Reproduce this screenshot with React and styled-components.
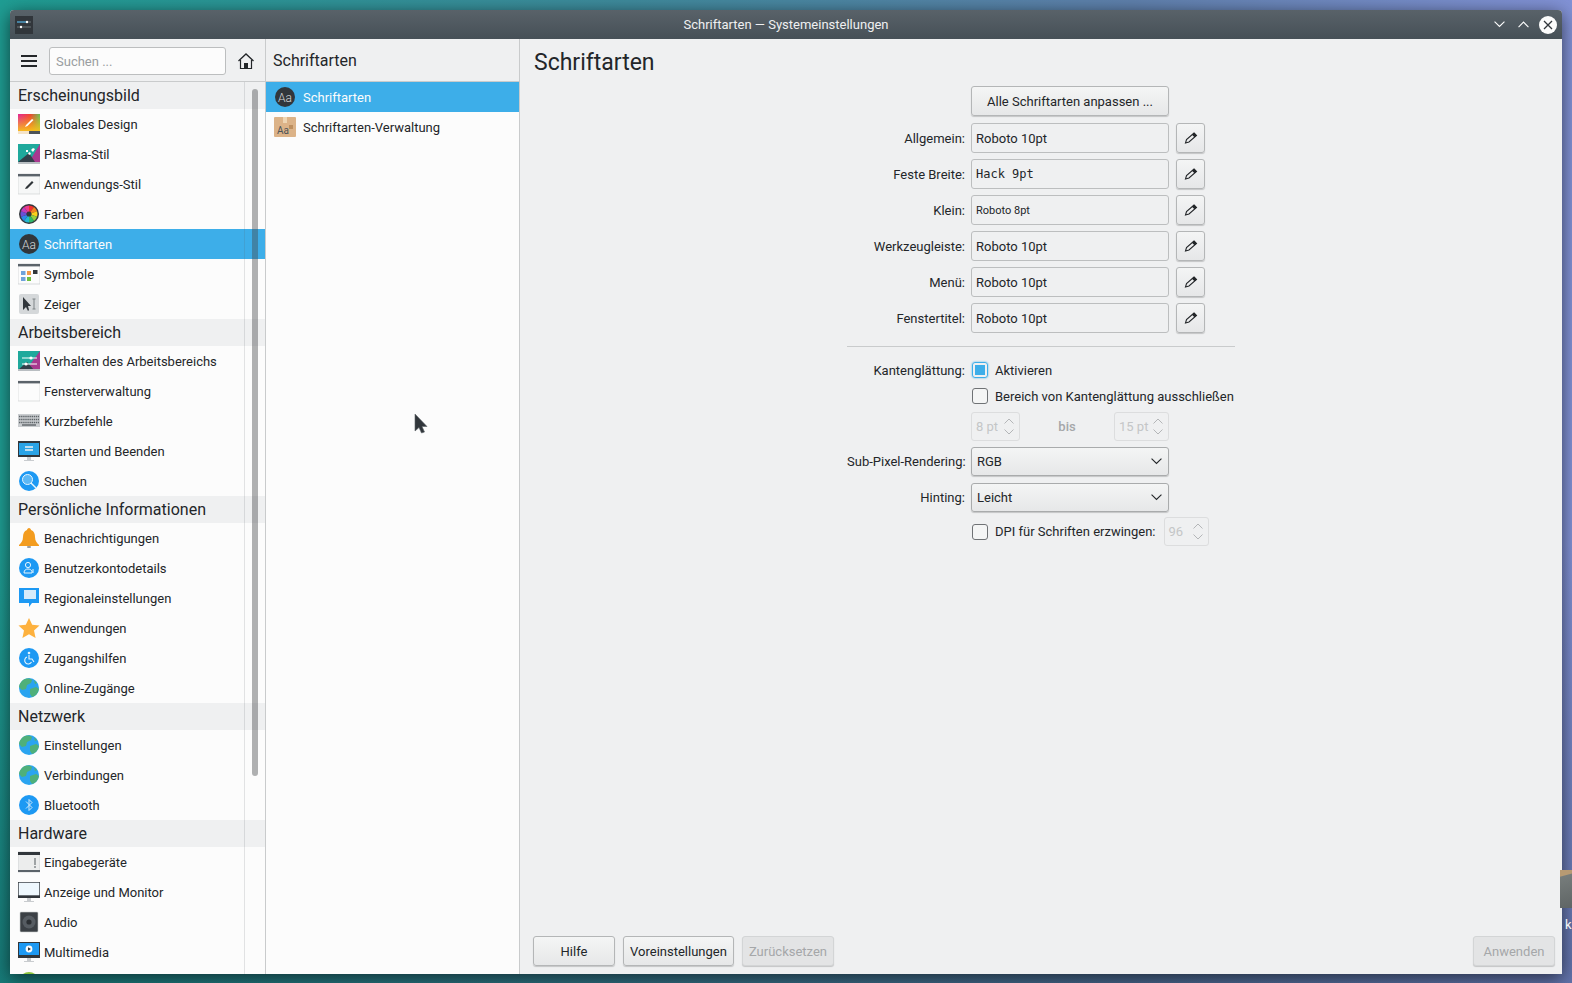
import React from "react";
import styled, { createGlobalStyle } from "styled-components";

const GlobalStyle = createGlobalStyle`
  html, body {
    margin: 0;
    height: 100%;
    overflow: hidden;
    font-family: Roboto, "Liberation Sans", sans-serif;
    font-size: 13px;
    color: #232629;
  }
  * { box-sizing: border-box; }
`;

const wedges = ["#f0302f", "#f58420", "#fbd01a", "#94d03c", "#2fb86c", "#22b8d0", "#2d86e8", "#6a4fd4", "#c03cc0", "#ec3a8e"];

const wedgePath = (i) => {
  const a0 = (i / wedges.length) * Math.PI * 2;
  const a1 = ((i + 1) / wedges.length) * Math.PI * 2;
  const p = (a) => `${(11 + 8.5 * Math.sin(a)).toFixed(2)} ${(11 - 8.5 * Math.cos(a)).toFixed(2)}`;
  return `M11 11L${p(a0)}A8.5 8.5 0 0 1 ${p(a1)}Z`;
};

const drawings = {
  global: (
    <>
      <defs>
        <linearGradient id="glA" x1="0" y1="0" x2="1" y2="0">
          <stop offset="0" stopColor="#e3259a" />
          <stop offset=".55" stopColor="#f0402f" />
          <stop offset="1" stopColor="#62c25a" />
        </linearGradient>
        <linearGradient id="glB" x1="0" y1="0" x2="0" y2="1">
          <stop offset="0" stopColor="#f8c21a" stopOpacity="0" />
          <stop offset="1" stopColor="#f8c21a" />
        </linearGradient>
      </defs>
      <rect width="22" height="18" fill="url(#glA)" />
      <rect width="22" height="18" fill="url(#glB)" />
      <rect y="17" width="22" height="3" fill="#f4e3c8" />
      <rect x="11" y="17" width="11" height="3" fill="#4d5358" />
      <path d="M7 13l1-2 6-6 1.5 1-6 6z" fill="#fff" />
    </>
  ),
  plasma: (
    <>
      <rect width="22" height="18" fill="#1fa99c" />
      <path d="M22 0v18H11z" fill="#a8388f" />
      <path d="M0 18l11-9 6 9z" fill="#33404a" />
      <path d="M10 10l1-2 2 1-1 2zM13 6l2-2 2 1-2 3zM8 6h2v2H8z" fill="#fff" />
      <rect y="18" width="22" height="2" fill="#b9bec2" />
    </>
  ),
  appstyle: (
    <>
      <rect width="22" height="20" fill="#f6f7f7" stroke="#c9cbcd" strokeWidth=".6" />
      <rect width="22" height="2.4" fill="#5b636a" />
      <path d="M7 15l1-2 6-6 1.5 1.5-6 6z" fill="#2f3438" />
    </>
  ),
  colors: (
    <>
      <circle cx="11" cy="11" r="10" fill="#31363b" />
      {wedges.map((c, i) => (
        <path key={c} d={wedgePath(i)} fill={c} />
      ))}
      <circle cx="11" cy="11" r="2.6" fill="#31363b" />
    </>
  ),
  fonts: (
    <>
      <circle cx="11" cy="11" r="10" fill="#31363b" />
      <text x="11" y="15.5" textAnchor="middle" fontSize="12" fontWeight="300" fontFamily="Roboto" fill="#d5d7d9">
        Aa
      </text>
    </>
  ),
  symbols: (
    <>
      <rect width="22" height="20" fill="#fcfcfc" stroke="#c0c3c5" strokeWidth=".6" />
      <rect width="22" height="2.4" fill="#5b636a" />
      <rect x="3" y="7" width="4.5" height="4" fill="#6fa3dc" />
      <rect x="9" y="7" width="4" height="4" fill="#f2994a" />
      <rect x="15" y="6" width="4.5" height="4" fill="#31363b" />
      <rect x="3" y="13" width="4.5" height="4" fill="#6fa3dc" />
      <rect x="9" y="13" width="4" height="4" fill="#6fbf3f" />
    </>
  ),
  cursor: (
    <>
      <rect x="1" y="0" width="20" height="20" rx="2" fill="#d5d8da" />
      <path d="M5 3v13l3-3 2 4 1-1-1-4h3z" fill="#31363b" />
      <path d="M16 5v10M14.5 5h3M14.5 15h3" stroke="#7f8487" strokeWidth="1" fill="none" />
    </>
  ),
  behavior: (
    <>
      <rect width="22" height="19" fill="#1fa99c" />
      <path d="M22 0v19H8z" fill="#a8388f" />
      <path d="M0 19l9-8 7 8z" fill="#33404a" />
      <path d="M4 7h15M4 13h15" stroke="#fff" strokeWidth="1" />
      <circle cx="13" cy="7" r="1.6" fill="#fff" />
      <circle cx="8" cy="13" r="1.6" fill="#fff" />
      <rect y="18" width="22" height="2" fill="#b9bec2" />
    </>
  ),
  windows: (
    <>
      <rect width="22" height="20" fill="#fcfcfc" stroke="#c9cbcd" strokeWidth=".6" />
      <rect width="22" height="2.4" fill="#5b636a" />
    </>
  ),
  keyboard: (
    <>
      <rect y="4" width="22" height="13" fill="#c9cccf" />
      <path d="M1 6.5h20M1 9.5h20M1 12.5h20" stroke="#5e6468" strokeWidth="1.6" strokeDasharray="1.4 .7" />
      <path d="M4 15h14" stroke="#5e6468" strokeWidth="1.4" />
    </>
  ),
  startup: (
    <>
      <rect width="22" height="16" fill="#31363b" />
      <rect x="1" y="2" width="20" height="12" fill="#2aa3e6" />
      <path d="M7 6h8M7 9h8" stroke="#f0f2f3" strokeWidth="1.6" />
      <rect x="9" y="16" width="4" height="3" fill="#c9cccf" />
      <rect x="6" y="19" width="10" height="1" fill="#c9cccf" />
    </>
  ),
  search: (
    <>
      <circle cx="11" cy="11" r="10" fill="#1d99f3" />
      <circle cx="9.5" cy="9.5" r="5" fill="#5cb8f5" stroke="#e8f5fd" strokeWidth="1" />
      <path d="M13 13l5 5" stroke="#e8f5fd" strokeWidth="1.4" />
    </>
  ),
  bell: (
    <>
      <path d="M11 0c1 0 2 1 2 2 3 1 4 4 4 7 0 4 2 6 4 8v1H1v-1c2-2 4-4 4-8 0-3 1-6 4-7 0-1 1-2 2-2z" fill="#f39c1f" />
      <rect x="9" y="18" width="4" height="2" rx="1" fill="#9a9ea1" />
    </>
  ),
  user: (
    <>
      <circle cx="11" cy="11" r="10" fill="#1d99f3" />
      <circle cx="10" cy="8" r="2.6" fill="none" stroke="#e8f5fd" strokeWidth="1" />
      <path d="M6 16c0-3 2-4 4-4s3 1 4 2v2z" fill="none" stroke="#e8f5fd" strokeWidth="1" />
      <path d="M15 12v4" stroke="#e8f5fd" strokeWidth="1" />
    </>
  ),
  regional: (
    <>
      <path d="M1 0h20v15H14l-3 4v-4H1z" fill="#1d99f3" />
      <rect x="6" y="2" width="12" height="9" fill="#d7ebfa" />
    </>
  ),
  star: <path d="M11 0l3.2 6.8 7.3.8-5.5 5 1.6 7.4L11 16.2 4.4 20 6 12.6.5 7.6l7.3-.8z" fill="#fdb13e" />,
  access: (
    <>
      <circle cx="11" cy="11" r="10" fill="#1d99f3" />
      <circle cx="11" cy="6" r="1.3" fill="#e8f5fd" />
      <path d="M11 8v4h3l2 3M9 10a3.6 3.6 0 1 0 4.5 5" fill="none" stroke="#e8f5fd" strokeWidth="1.1" />
    </>
  ),
  globe: (
    <>
      <circle cx="11" cy="11" r="10" fill="#2aa4f0" />
      <path d="M5 3c3-2 7-2 9 0l-1 3-4 2-1 4-4 1-3-3c0-3 2-5 4-7z" fill="#4fb07a" />
      <path d="M12 12l6-2 3 2c-1 4-3 7-7 8l-2-3z" fill="#4fb07a" />
      <path d="M16 3l3 3-2 1z" fill="#4fb07a" />
    </>
  ),
  bluetooth: (
    <>
      <circle cx="11" cy="11" r="10" fill="#1d99f3" />
      <path d="M8 7.5l6 6-3 3v-11l3 3-6 6" fill="none" stroke="#cfe9fb" strokeWidth="1" />
    </>
  ),
  input: (
    <>
      <rect width="22" height="20" fill="#eceded" stroke="#c0c3c5" strokeWidth=".6" />
      <rect width="22" height="3" fill="#31363b" />
      <rect y="18" width="22" height="2" fill="#5b636a" />
      <path d="M17 6v7M17 14v2" stroke="#7f8487" strokeWidth="1.4" />
    </>
  ),
  monitor: (
    <>
      <rect width="22" height="16" fill="#31363b" />
      <rect x=".7" y=".7" width="20.6" height="12.6" fill="#eef7fd" />
      <rect x="9" y="16" width="4" height="3" fill="#c9cccf" />
      <rect x="6" y="19" width="10" height="1" fill="#c9cccf" />
    </>
  ),
  audio: (
    <>
      <rect x="2" y="0" width="18" height="20" rx="1" fill="#3b4045" stroke="#c9cccf" strokeWidth=".6" />
      <circle cx="11" cy="10" r="6.5" fill="#565c62" />
      <circle cx="11" cy="10" r="2.6" fill="#2b2f33" />
    </>
  ),
  multimedia: (
    <>
      <rect width="22" height="16" fill="#31363b" />
      <rect x="1" y="1" width="20" height="12" fill="#1d99f3" />
      <circle cx="11" cy="7" r="3.4" fill="#fcfcfc" />
      <path d="M10 5.2v3.6L13 7z" fill="#31363b" />
      <rect x="9" y="16" width="4" height="3" fill="#c9cccf" />
      <rect x="6" y="19" width="10" height="1" fill="#c9cccf" />
    </>
  ),
  power: <circle cx="11" cy="11" r="10" fill="#8ec53c" />,
  fontpack: (
    <>
      <rect width="22" height="20" rx="1" fill="#dcb388" />
      <rect x="9" y="0" width="4" height="6" fill="#eed6b4" />
      <text x="9" y="17" textAnchor="middle" fontSize="10" fontFamily="Roboto" fill="#4d5358">
        Aa
      </text>
      <rect x="15" y="8" width="4" height="4" fill="#bd8f5f" />
    </>
  ),
};

// these drawings are 20 tall, one px lower than the row centre would put them
const lowered = ["global", "plasma", "appstyle", "symbols", "cursor", "behavior", "windows", "startup", "regional", "bell", "input", "monitor", "audio", "multimedia", "star", "fontpack"];

const categories = [
  {
    title: "Erscheinungsbild",
    items: [
      ["global", "Globales Design"],
      ["plasma", "Plasma-Stil"],
      ["appstyle", "Anwendungs-Stil"],
      ["colors", "Farben"],
      ["fonts", "Schriftarten", true],
      ["symbols", "Symbole"],
      ["cursor", "Zeiger"],
    ],
  },
  {
    title: "Arbeitsbereich",
    items: [
      ["behavior", "Verhalten des Arbeitsbereichs"],
      ["windows", "Fensterverwaltung"],
      ["keyboard", "Kurzbefehle"],
      ["startup", "Starten und Beenden"],
      ["search", "Suchen"],
    ],
  },
  {
    title: "Persönliche Informationen",
    items: [
      ["bell", "Benachrichtigungen"],
      ["user", "Benutzerkontodetails"],
      ["regional", "Regionaleinstellungen"],
      ["star", "Anwendungen"],
      ["access", "Zugangshilfen"],
      ["globe", "Online-Zugänge"],
    ],
  },
  {
    title: "Netzwerk",
    items: [
      ["globe", "Einstellungen"],
      ["globe", "Verbindungen"],
      ["bluetooth", "Bluetooth"],
    ],
  },
  {
    title: "Hardware",
    items: [
      ["input", "Eingabegeräte"],
      ["monitor", "Anzeige und Monitor"],
      ["audio", "Audio"],
      ["multimedia", "Multimedia"],
      ["power", ""],
    ],
  },
];

const fontRows = [
  ["Allgemein:", "Roboto 10pt", "normal"],
  ["Feste Breite:", "Hack 9pt", "mono"],
  ["Klein:", "Roboto 8pt", "small"],
  ["Werkzeugleiste:", "Roboto 10pt", "normal"],
  ["Menü:", "Roboto 10pt", "normal"],
  ["Fenstertitel:", "Roboto 10pt", "normal"],
];

const Icon = ({ name }) => (
  <ItemIcon viewBox={lowered.includes(name) ? "0 -1 22 22" : "0 0 22 22"} aria-hidden="true">
    {drawings[name]}
  </ItemIcon>
);

const Chevron = ({ up, size = 10, color = "#4d5358" }) => (
  <svg width={size} height={size * 0.6} viewBox="0 0 10 6" fill="none" stroke={color} strokeWidth="1">
    <path d={up ? "M.5 5.5L5 1l4.5 4.5" : "M.5.5L5 5l4.5-4.5"} />
  </svg>
);

const PencilIcon = () => (
  <svg width="14" height="14" viewBox="0 0 14 14">
    <path d="M10 2l2.5 2.5-7.5 6.5-3.5 1 1-3.5z" fill="none" stroke="#232629" strokeWidth="1.1" />
    <path d="M10 2l2.5 2.5-2 1.8-2.6-2.5z" fill="#232629" />
  </svg>
);

const SpinBox = ({ value, width }) => (
  <Spin $width={width}>
    <span>{value}</span>
    <SpinArrows>
      <Chevron up color="#b4b6b8" />
      <Chevron color="#b4b6b8" />
    </SpinArrows>
  </Spin>
);

const App = () => {
  return (
    <Desktop>
      <GlobalStyle />
      <DesktopIcon />
      <DesktopLabel>k</DesktopLabel>
      <Window>
        <TitleBar>
          <AppLogo viewBox="0 0 18 18">
            <rect width="18" height="18" fill="#31363b" />
            <path d="M2 6h14M2 11h14" stroke="#6d7479" strokeWidth="1" />
            <path d="M2 6h10" stroke="#3daee9" strokeWidth="1" />
            <path d="M5 11h0" stroke="#fff" strokeWidth="1" />
            <circle cx="12" cy="6" r="1.2" fill="#fcfcfc" />
            <circle cx="6" cy="11" r="1.2" fill="#fcfcfc" />
          </AppLogo>
          <WindowTitle>Schriftarten — Systemeinstellungen</WindowTitle>
          <WindowButtons>
            <Chevron size={11} color="#fcfcfc" />
            <Chevron up size={11} color="#fcfcfc" />
            <CloseButton viewBox="0 0 18 18">
              <circle cx="9" cy="9" r="9" fill="#fcfcfc" />
              <path d="M5 5l8 8M13 5l-8 8" stroke="#31363b" strokeWidth="1.3" />
            </CloseButton>
          </WindowButtons>
        </TitleBar>
        <Body>
          <Sidebar>
            <SideHeader>
              <Burger>
                <i />
                <i />
                <i />
              </Burger>
              <SearchBox>Suchen ...</SearchBox>
              <svg width="18" height="18" viewBox="0 0 18 18">
                <path d="M1.5 9L9 2l7.5 7" fill="none" stroke="#232629" strokeWidth="1.3" />
                <path d="M3.5 8v8.5h11V8" fill="none" stroke="#232629" strokeWidth="1.2" />
                <rect x="7" y="11" width="4" height="5.5" fill="#232629" />
              </svg>
            </SideHeader>
            <SideList>
              {categories.map((cat) => (
                <div key={cat.title}>
                  <CategoryTitle>{cat.title}</CategoryTitle>
                  {cat.items.map(([icon, label, active]) => (
                    <Item key={label + icon} $active={active}>
                      <Icon name={icon} />
                      <span>{label}</span>
                    </Item>
                  ))}
                </div>
              ))}
              <ScrollTrack />
              <ScrollThumb />
            </SideList>
          </Sidebar>
          <Middle>
            <MiddleHeader>Schriftarten</MiddleHeader>
            <MiddleList>
              <Item $active $indent>
                <Icon name="fonts" />
                <span>Schriftarten</span>
              </Item>
              <Item $indent>
                <Icon name="fontpack" />
                <span>Schriftarten-Verwaltung</span>
              </Item>
              <Pointer viewBox="0 0 14 22">
                <path d="M1 1v17l4-3.5L7.5 20l3-1-2.5-5.5h5z" fill="#31363b" stroke="#5b6167" strokeWidth=".6" />
              </Pointer>
            </MiddleList>
          </Middle>
          <Content>
            <PageTitle>Schriftarten</PageTitle>
            <Form>
              <Row $gap={0}>
                <span />
                <Button $wide>Alle Schriftarten anpassen ...</Button>
              </Row>
              {fontRows.map(([label, value, kind], i) => (
                <Row key={label} $gap={i === 0 ? 7 : 6}>
                  <Label>{label}</Label>
                  <FieldLine>
                    <FontField $kind={kind}>{value}</FontField>
                    <EditButton>
                      <PencilIcon />
                    </EditButton>
                  </FieldLine>
                </Row>
              ))}
              <Separator />
              <Row $gap={13} $height={20}>
                <Label>Kantenglättung:</Label>
                <CheckLine>
                  <CheckBox $checked />
                  Aktivieren
                </CheckLine>
              </Row>
              <Row $height={20}>
                <span />
                <CheckLine>
                  <CheckBox />
                  Bereich von Kantenglättung ausschließen
                </CheckLine>
              </Row>
              <Row $height={29}>
                <span />
                <SpinLine>
                  <SpinBox value="8 pt" width={49} />
                  <BisText>bis</BisText>
                  <SpinBox value="15 pt" width={55} />
                </SpinLine>
              </Row>
              <Row $height={29}>
                <Label>Sub-Pixel-Rendering:</Label>
                <Combo>
                  RGB
                  <Chevron size={11} color="#232629" />
                </Combo>
              </Row>
              <Row $gap={7} $height={29}>
                <Label>Hinting:</Label>
                <Combo>
                  Leicht
                  <Chevron size={11} color="#232629" />
                </Combo>
              </Row>
              <Row $gap={5} $height={29}>
                <span />
                <CheckLine>
                  <CheckBox />
                  DPI für Schriften erzwingen:
                  <SpinBox value="96" width={45} />
                </CheckLine>
              </Row>
            </Form>
            <Footer>
              <Button $width={82}>Hilfe</Button>
              <Button $width={111}>Voreinstellungen</Button>
              <Button $width={92} disabled>
                Zurücksetzen
              </Button>
              <FooterGap />
              <Button $width={82} disabled>
                Anwenden
              </Button>
            </Footer>
          </Content>
        </Body>
      </Window>
    </Desktop>
  );
};

const Desktop = styled.div`
  position: relative;
  height: 983px;
  padding: 10px;
  background:
    linear-gradient(180deg, rgba(0, 0, 0, 0) 55%, rgba(0, 20, 40, 0.25) 100%),
    linear-gradient(90deg, #1f9d93 0%, #3f8a9c 40%, #5f80ac 72%, #8292d6 100%);
`;
const DesktopIcon = styled.div`
  position: absolute;
  left: 1560px;
  top: 870px;
  width: 12px;
  height: 38px;
  background: linear-gradient(165deg, #b79a73 0, #b79a73 6px, #767c7b 7px, #5f6565 100%);
`;
const DesktopLabel = styled.div`
  position: absolute;
  left: 1565px;
  top: 917px;
  color: #f5f5f5;
  font-size: 13px;
`;
const Window = styled.div`
  display: flex;
  flex-direction: column;
  height: 964px;
  width: 1552px;
  border-radius: 4px 4px 0 0;
  background: #eff0f1;
  overflow: hidden;
  box-shadow: 0 4px 18px rgba(0, 0, 0, 0.6);
`;
const TitleBar = styled.div`
  display: grid;
  grid-template-columns: 1fr auto 1fr;
  align-items: center;
  height: 29px;
  padding: 0 5px;
  background: linear-gradient(180deg, #596269 0%, #465057 100%);
  flex-shrink: 0;
`;
const AppLogo = styled.svg`
  width: 18px;
  height: 18px;
`;
const WindowTitle = styled.div`
  color: #eff0f1;
  font-size: 13px;
`;
const WindowButtons = styled.div`
  display: flex;
  align-items: center;
  justify-content: flex-end;
  gap: 13px;
`;
const CloseButton = styled.svg`
  width: 18px;
  height: 18px;
  margin-left: -3px;
`;
const Body = styled.div`
  display: flex;
  flex: 1;
  min-height: 0;
`;
const Sidebar = styled.div`
  display: flex;
  flex-direction: column;
  width: 256px;
  flex-shrink: 0;
  border-right: 1px solid #c9cbcc;
`;
const SideHeader = styled.div`
  display: flex;
  align-items: center;
  height: 43px;
  flex-shrink: 0;
  padding: 2px 0 0 11px;
  border-bottom: 1px solid #c9cbcc;
  svg {
    margin-left: 11px;
  }
`;
const Burger = styled.div`
  display: flex;
  flex-direction: column;
  gap: 3px;
  width: 16px;
  i {
    height: 2px;
    background: #232629;
  }
`;
const SearchBox = styled.div`
  display: flex;
  align-items: center;
  width: 177px;
  height: 28px;
  margin-left: 12px;
  padding-left: 6px;
  background: #fcfcfc;
  border: 1px solid #bcbebf;
  border-radius: 3px;
  color: #9a9ea1;
`;
const SideList = styled.div`
  position: relative;
  flex: 1;
  min-height: 0;
  overflow: hidden;
  background: #fcfcfc;
`;
const CategoryTitle = styled.div`
  display: flex;
  align-items: center;
  height: 27px;
  padding-left: 8px;
  background: #eff0f1;
  font-size: 16px;
`;
const Item = styled.div`
  display: flex;
  align-items: center;
  gap: 4px;
  height: 30px;
  padding-left: 8px;
  background: ${(p) => (p.$active ? "#3daee9" : "transparent")};
  color: ${(p) => (p.$active ? "#fcfcfc" : "#232629")};
  span {
    margin-left: ${(p) => (p.$indent ? "3px" : "0")};
  }
`;
const ItemIcon = styled.svg`
  width: 22px;
  height: 22px;
  flex-shrink: 0;
`;
const ScrollTrack = styled.div`
  position: absolute;
  left: 234px;
  top: 0;
  bottom: 0;
  width: 1px;
  background: rgba(90, 95, 100, 0.16);
`;
const ScrollThumb = styled.div`
  position: absolute;
  left: 242px;
  top: 7px;
  width: 6px;
  height: 687px;
  border-radius: 3px;
  background: rgba(70, 72, 75, 0.42);
`;
const Middle = styled.div`
  display: flex;
  flex-direction: column;
  width: 254px;
  flex-shrink: 0;
  border-right: 1px solid #c9cbcc;
`;
const MiddleHeader = styled.div`
  display: flex;
  align-items: center;
  height: 43px;
  flex-shrink: 0;
  padding-left: 7px;
  border-bottom: 1px solid #c9cbcc;
  font-size: 16px;
`;
const MiddleList = styled.div`
  position: relative;
  flex: 1;
  background: #fcfcfc;
`;
const Pointer = styled.svg`
  position: absolute;
  left: 148px;
  top: 331px;
  width: 14px;
  height: 22px;
`;
const Content = styled.div`
  display: flex;
  flex-direction: column;
  flex: 1;
  min-width: 0;
`;
const PageTitle = styled.h1`
  margin: 0;
  height: 47px;
  padding: 10px 0 0 14px;
  font-size: 23px;
  line-height: 28px;
  font-weight: 400;
`;
const Form = styled.div`
  display: flex;
  flex-direction: column;
  width: 388px;
  margin: 0 auto;
`;
const Row = styled.div`
  display: grid;
  grid-template-columns: 118px 1fr;
  column-gap: 6px;
  align-items: center;
  height: ${(p) => p.$height ?? 30}px;
  margin-top: ${(p) => p.$gap ?? 6}px;
`;
const Label = styled.div`
  text-align: right;
  white-space: nowrap;
`;
const FieldLine = styled.div`
  display: flex;
  gap: 7px;
  height: 100%;
`;
const FontField = styled.div`
  display: flex;
  align-items: center;
  width: 198px;
  padding-left: 4px;
  border: 1px solid #bcbebf;
  border-radius: 3px;
  background: #eff0f1;
  font-family: ${(p) => (p.$kind === "mono" ? '"DejaVu Sans Mono", monospace' : "Roboto, sans-serif")};
  font-size: ${(p) => (p.$kind === "mono" ? "12px" : p.$kind === "small" ? "11px" : "13px")};
  white-space: pre;
`;
const Button = styled.button`
  width: ${(p) => (p.$wide ? "198px" : `${p.$width}px`)};
  height: 30px;
  padding: 0;
  border: 1px solid ${(p) => (p.disabled ? "#d3d5d6" : "#b4b6b7")};
  border-radius: 3px;
  background: ${(p) => (p.disabled ? "#e3e4e5" : "linear-gradient(180deg, #f4f5f5 0%, #e6e7e8 100%)")};
  box-shadow: 0 1px 1px rgba(0, 0, 0, 0.18);
  color: ${(p) => (p.disabled ? "#a5a7a9" : "#232629")};
  font-family: Roboto, sans-serif;
  font-size: 13px;
`;
const EditButton = styled(Button)`
  display: flex;
  align-items: center;
  justify-content: center;
  width: 29px;
  height: 30px;
`;
const Separator = styled.div`
  height: 1px;
  margin-top: 13px;
  background: #c9cbcc;
`;
const CheckLine = styled.div`
  display: flex;
  align-items: center;
  padding-left: 1px;
  white-space: nowrap;
`;
const CheckBox = styled.div`
  position: relative;
  width: 16px;
  height: 16px;
  margin-right: 7px;
  flex-shrink: 0;
  border: 1px solid ${(p) => (p.$checked ? "#3daee9" : "#6f7275")};
  border-radius: 3px;
  background: ${(p) => (p.$checked ? "radial-gradient(#3daee9, #3daee9)" : "#f4f5f5")};
  background-size: 10px 10px;
  background-position: center;
  background-repeat: no-repeat;
  box-shadow: ${(p) => (p.$checked ? "0 0 2px #3daee9" : "none")};
`;
const SpinLine = styled.div`
  display: flex;
  align-items: center;
  justify-content: space-between;
  width: 198px;
`;
const Spin = styled.div`
  display: flex;
  align-items: center;
  justify-content: space-between;
  width: ${(p) => p.$width}px;
  height: 29px;
  padding: 0 5px 0 4px;
  border: 1px solid #dcddde;
  border-radius: 3px;
  color: #c4c6c7;
  ${CheckLine} & {
    margin-left: 8px;
  }
`;
const SpinArrows = styled.div`
  display: flex;
  flex-direction: column;
  gap: 5px;
`;
const BisText = styled.div`
  color: #a5a7a9;
  font-weight: 500;
`;
const Combo = styled.div`
  display: flex;
  align-items: center;
  justify-content: space-between;
  width: 198px;
  height: 29px;
  padding: 0 6px 0 5px;
  border: 1px solid #a9abac;
  border-radius: 3px;
  background: linear-gradient(180deg, #f4f5f5 0%, #e6e7e8 100%);
  box-shadow: 0 1px 1px rgba(0, 0, 0, 0.18);
`;
const Footer = styled.div`
  display: flex;
  gap: 8px;
  margin-top: auto;
  padding: 0 7px 8px 13px;
`;
const FooterGap = styled.div`
  flex: 1;
`;

export default App;
